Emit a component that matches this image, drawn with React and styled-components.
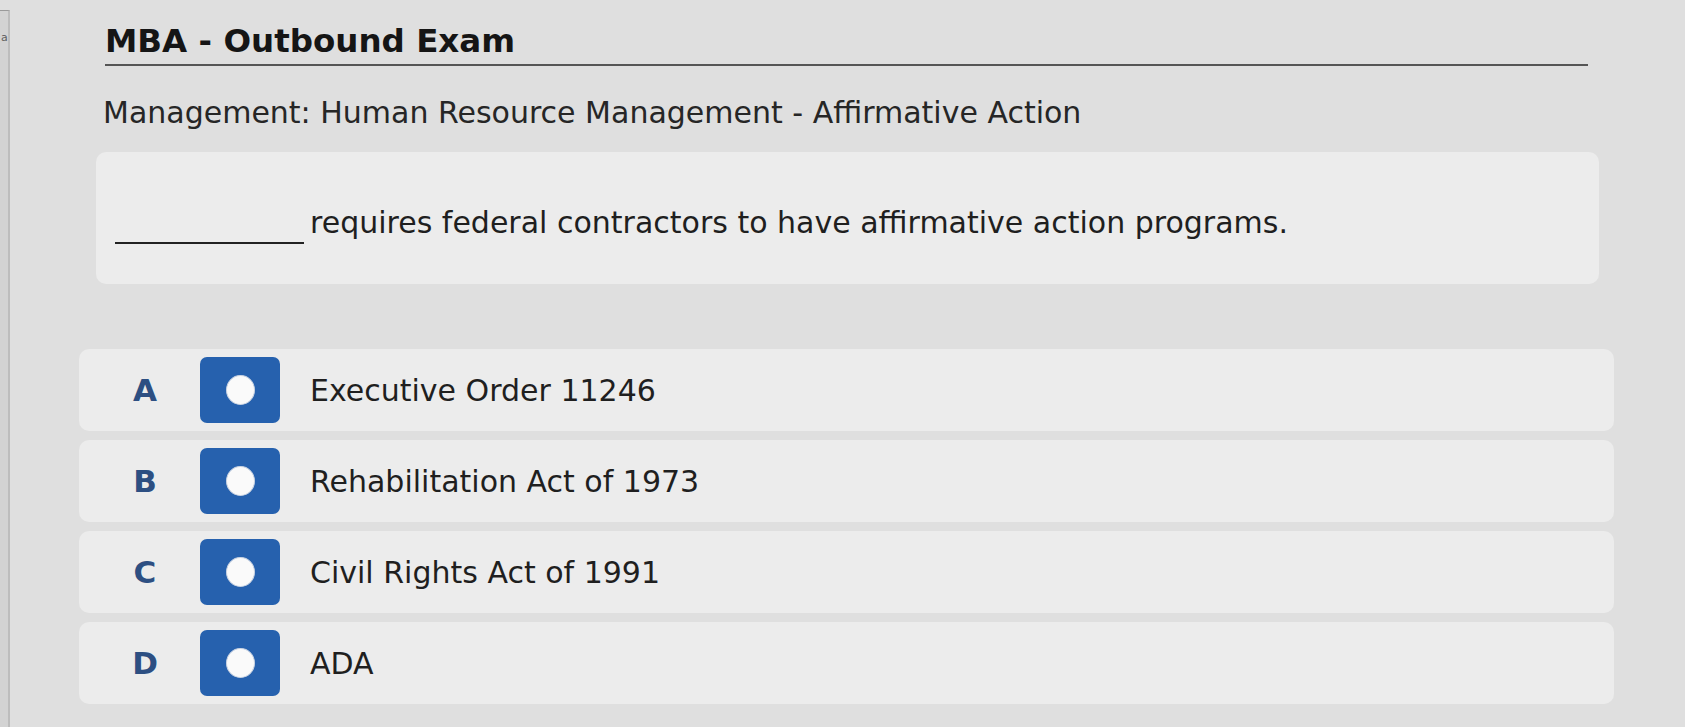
import styled, { createGlobalStyle } from "styled-components";

const GlobalStyle = createGlobalStyle`
  html, body {
    margin: 0;
    padding: 0;
    background: #dfdfdf;
    font-family: "DejaVu Sans", "Liberation Sans", sans-serif;
    color: #1e1e1e;
  }
`;

const options = [
  { letter: "A", text: "Executive Order 11246" },
  { letter: "B", text: "Rehabilitation Act of 1973" },
  { letter: "C", text: "Civil Rights Act of 1991" },
  { letter: "D", text: "ADA" },
];

export default function App() {
  return (
    <>
      <GlobalStyle />
      <Page>
        <Edge>a</Edge>
        <Main>
          <Header>
            <Title>MBA - Outbound Exam</Title>
          </Header>
          <Topic>Management: Human Resource Management - Affirmative Action</Topic>
          <QuestionBox>
            <Blank />
            <Question>requires federal contractors to have affirmative action programs.</Question>
          </QuestionBox>
          <Options>
            {options.map((o) => (
              <Row key={o.letter}>
                <Letter>{o.letter}</Letter>
                <Radio>
                  <Dot />
                </Radio>
                <OptionText>{o.text}</OptionText>
              </Row>
            ))}
          </Options>
        </Main>
      </Page>
    </>
  );
}

const Page = styled.div`
  display: flex;
  height: 727px;
  overflow: hidden;
`;

const Edge = styled.div`
  width: 10px;
  background: #d3d3d3;
  border-right: 2px solid #bdbdbd;
  border-top: 1px solid #9a9a9a;
  margin-top: 10px;
  color: #5e5e5e;
  font-size: 11px;
  line-height: 14px;
  padding-top: 20px;
  padding-left: 1px;
  box-sizing: border-box;
`;

const Main = styled.div`
  flex: 1;
  padding: 0 71px 0 69px;
`;

const Header = styled.div`
  margin: 0 26px;
  border-bottom: 2px solid #555;
  padding-top: 23px;
  padding-bottom: 5px;
`;

const Title = styled.h1`
  margin: 0;
  font-size: 32.5px;
  font-weight: 700;
  line-height: 36px;
  color: #151515;
`;

const Topic = styled.div`
  margin: 29px 0 0 24px;
  font-size: 30px;
  line-height: 36px;
  color: #262626;
`;

const QuestionBox = styled.div`
  margin: 21px 15px 0 17px;
  height: 132px;
  background: #ececec;
  border-radius: 10px;
  display: flex;
  align-items: flex-end;
  padding: 0 0 40px 19px;
  box-sizing: border-box;
`;

const Blank = styled.div`
  width: 189px;
  border-bottom: 2px solid #222;
  margin-right: 6px;
`;

const Question = styled.div`
  font-size: 30px;
  line-height: 36px;
  margin-bottom: 3px;
  color: #1f1f1f;
`;

const Options = styled.div`
  margin-top: 65px;
  display: flex;
  flex-direction: column;
  gap: 9px;
`;

const Row = styled.div`
  height: 82px;
  background: #ececec;
  border-radius: 10px;
  display: flex;
  align-items: center;
`;

const Letter = styled.div`
  width: 60px;
  margin-left: 36px;
  text-align: center;
  font-size: 31px;
  font-weight: 700;
  color: #2d4f82;
`;

const Radio = styled.div`
  margin-left: 25px;
  width: 80px;
  height: 66px;
  background: #2661ae;
  border-radius: 7px;
  display: flex;
  align-items: center;
  justify-content: center;
`;

const Dot = styled.div`
  width: 27px;
  height: 28px;
  border-radius: 50%;
  background: #fafafa;
  border: 1px solid #c9d3e2;
`;

const OptionText = styled.div`
  margin-left: 30px;
  font-size: 30px;
  color: #1f1f1f;
`;
